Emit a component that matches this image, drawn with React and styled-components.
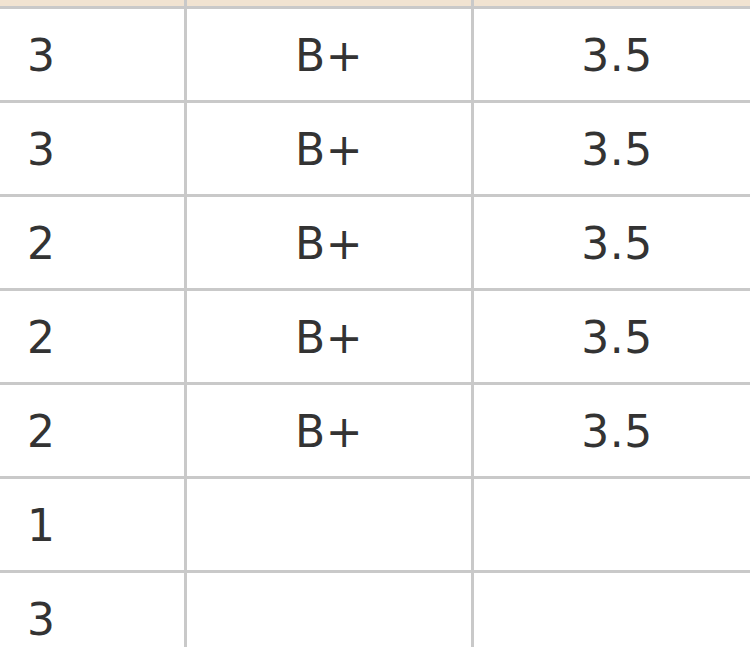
import React from 'react'
import styled, { createGlobalStyle } from 'styled-components'

const GlobalStyle = createGlobalStyle`
  html, body {
    margin: 0;
    padding: 0;
    background: #ffffff;
    overflow: hidden;
  }
`

const Table = styled.div`
  width: 760px;
  font-family: Verdana, "DejaVu Sans", sans-serif;
  color: #333333;
`

const Row = styled.div`
  display: grid;
  grid-template-columns: 187px 287px 1fr;
  height: ${p => (p.head ? '6px' : '91px')};
  border-bottom: 3px solid #c9c9c9;
  background: ${p => (p.head ? '#f1e3d1' : '#ffffff')};
`

const Cell = styled.div`
  display: flex;
  align-items: center;
  justify-content: ${p => (p.left ? 'flex-start' : 'center')};
  padding-left: ${p => (p.left ? '27px' : '0')};
  padding-top: 2px;
  font-size: 44px;
  line-height: 1;
  letter-spacing: 0.5px;
  border-right: ${p => (p.last ? 'none' : '3px solid #c9c9c9')};
`

const rows = [
  ['3', 'B+', '3.5'],
  ['3', 'B+', '3.5'],
  ['2', 'B+', '3.5'],
  ['2', 'B+', '3.5'],
  ['2', 'B+', '3.5'],
  ['1', '', ''],
  ['3', '', ''],
]

const App = () => {
  return (
    <>
      <GlobalStyle />
      <Table>
        <Row head>
          <Cell left />
          <Cell />
          <Cell last />
        </Row>
        {rows.map((r, i) => (
          <Row key={i}>
            <Cell left>{r[0]}</Cell>
            <Cell>{r[1]}</Cell>
            <Cell last>{r[2]}</Cell>
          </Row>
        ))}
      </Table>
    </>
  )
}

export default App
